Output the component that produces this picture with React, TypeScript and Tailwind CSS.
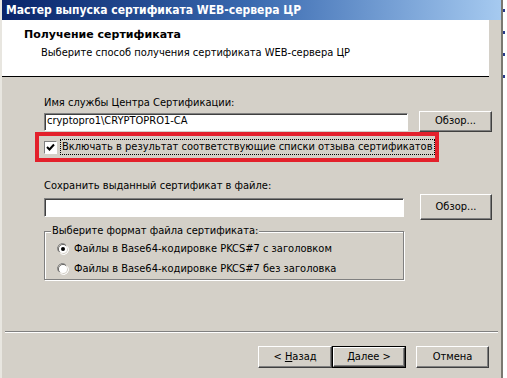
import React from "react";

const font = "font-['DejaVu_Sans_Condensed','Liberation_Sans',sans-serif]";

const WinButton: React.FC<{ children: React.ReactNode; isDefault?: boolean; className?: string }> = ({
    children,
    isDefault,
    className = "",
}) => (
    <div
        className={`flex items-center justify-center bg-[#d4d0c8] text-[11px] text-black ${
            isDefault ? "border border-black" : ""
        } ${className}`}
    >
        <div className="flex h-full w-full items-center justify-center border border-t-white border-l-white border-r-[#404040] border-b-[#404040] shadow-[inset_-1px_-1px_0_#808080]">
            {children}
        </div>
    </div>
);

const Field: React.FC<{ value?: string; className?: string }> = ({ value, className = "" }) => (
    <div
        className={`flex items-center bg-white border border-t-[#808080] border-l-[#808080] border-r-white border-b-white shadow-[inset_1px_1px_0_#404040] px-[2px] text-[11px] text-black ${className}`}
    >
        {value}
    </div>
);

const Radio: React.FC<{ checked?: boolean }> = ({ checked }) => (
    <svg width="12" height="12" viewBox="0 0 12 12" className="shrink-0">
        <path d="M1.5 8.5 A5 5 0 0 1 8.5 1.5" fill="none" stroke="#808080" strokeWidth="1" />
        <path d="M3 9 A4 4 0 0 1 9 3" fill="none" stroke="#404040" strokeWidth="1" />
        <circle cx="6" cy="6" r="4" fill="white" />
        <path d="M10.5 3.5 A5 5 0 0 1 3.5 10.5" fill="none" stroke="#ffffff" strokeWidth="1" />
        {checked && <circle cx="6" cy="6" r="2" fill="black" />}
    </svg>
);

export default function App() {
    return (
        <div className={`flex h-[378px] w-[507px] overflow-hidden bg-white ${font}`}>
            <div className="flex h-full w-[503px] flex-col border-l-[2px] border-l-[#e8e6e0] border-r-[2px] border-r-[#7a7870] bg-[#d4d0c8]">
                {/* title bar */}
                <div className="flex h-[20px] items-center bg-gradient-to-r from-[#0a246a] via-[#3a6ab0] to-[#a6caf0] px-[4px] text-[12px] font-bold text-white">
                    Мастер выпуска сертификата WEB-сервера ЦР
                </div>

                {/* header */}
                <div className="flex h-[57px]">
                    <div className="flex w-[487px] flex-col border-b border-black bg-white pl-[22px] pt-[7px]">
                        <div className="font-['DejaVu_Sans',sans-serif] text-[11px] font-bold leading-[15px] text-black">
                            Получение сертификата
                        </div>
                        <div className="mt-[4px] pl-[17px] text-[11px] leading-[14px] text-black">
                            Выберите способ получения сертификата WEB-сервера ЦР
                        </div>
                    </div>
                </div>

                {/* body */}
                <div className="flex flex-1 flex-col pl-[42px] text-[11px] text-black">
                    <div className="mt-[19px] leading-[14px]">Имя службы Центра Сертификации:</div>
                    <div className="mt-[1px] flex h-[21px] items-center">
                        <Field value="cryptopro1\CRYPTOPRO1-CA" className="h-[18px] w-[364px]" />
                        <WinButton className="ml-[11px] h-[21px] w-[73px]">Обзор...</WinButton>
                    </div>
                    <div className="-ml-[9px] flex h-[30px] w-[404px] items-center border-[4px] border-[#e3202b] pl-[5px]">
                        <div className="flex h-[13px] w-[13px] items-center justify-center border border-t-[#808080] border-l-[#808080] border-r-white border-b-white bg-white">
                            <svg width="9" height="9" viewBox="0 0 9 9">
                                <path d="M1 4 L3.5 6.5 L8 1.5" fill="none" stroke="black" strokeWidth="2" />
                            </svg>
                        </div>
                        <div className="ml-[3px] border border-dotted border-black px-[1px] leading-[14px]">
                            Включать в результат соответствующие списки отзыва сертификатов
                        </div>
                    </div>

                    <div className="mt-[17px] leading-[14px]">Сохранить выданный сертификат в файле:</div>
                    <div className="mt-[1px] flex h-[26px] items-center">
                        <Field className="h-[19px] w-[360px]" />
                        <WinButton className="ml-[16px] h-[26px] w-[72px]">Обзор...</WinButton>
                    </div>

                    <div className="relative mt-[11px] h-[49px] w-[360px] border border-[#808080] shadow-[inset_1px_1px_0_white,1px_1px_0_white]">
                        <div className="absolute -top-[8px] left-[6px] bg-[#d4d0c8] px-[1px] leading-[14px]">
                            Выберите формат файла сертификата:
                        </div>
                        <div className="flex flex-col pl-[12px] pt-[10px]">
                            <div className="flex h-[14px] items-center gap-[5px]">
                                <Radio checked />
                                <span>Файлы в Base64-кодировке PKCS#7 с заголовком</span>
                            </div>
                            <div className="mt-[6px] flex h-[14px] items-center gap-[5px]">
                                <Radio />
                                <span>Файлы в Base64-кодировке PKCS#7 без заголовка</span>
                            </div>
                        </div>
                    </div>
                </div>

                {/* footer */}
                <div className="ml-[3px] mr-[3px] border-t border-t-[#808080] border-b border-b-white" />
                <div className="flex h-[45px] items-start pt-[13px] pl-[256px]">
                    <WinButton className="h-[22px] w-[74px]">
                        <span>
                            &lt; <span className="underline">Н</span>азад
                        </span>
                    </WinButton>
                    <WinButton isDefault className="h-[22px] w-[74px]">
                        <span>
                            <span className="underline">Д</span>алее &gt;
                        </span>
                    </WinButton>
                    <WinButton className="ml-[10px] h-[22px] w-[73px]">Отмена</WinButton>
                </div>
            </div>

            {/* outside strip */}
            <div className="flex w-[4px] flex-col bg-white">
                <div className="mt-[9px] h-[3px] w-[2px] bg-[#2a3a8a]" />
                <div className="mt-[19px] h-[3px] w-[2px] bg-[#2a3a8a]" />
                <div className="mt-[19px] h-[3px] w-[2px] bg-[#2a3a8a]" />
                <div className="mt-[19px] h-[3px] w-[2px] bg-[#2a3a8a]" />
            </div>
        </div>
    );
}
